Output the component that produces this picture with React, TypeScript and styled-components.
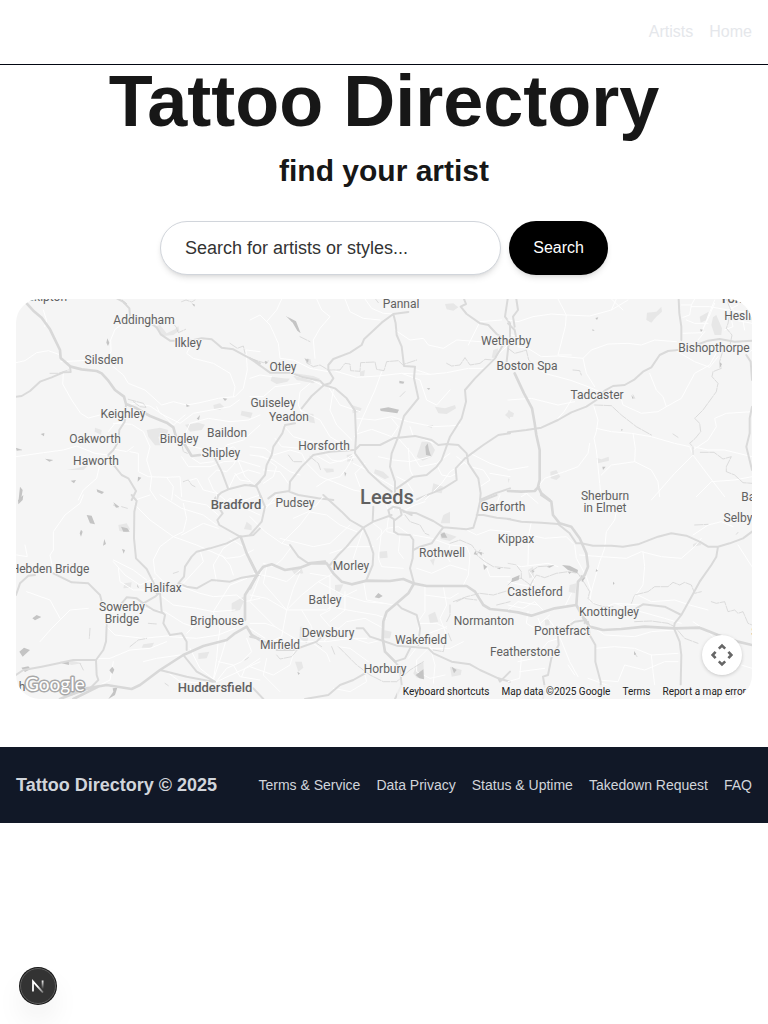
import React from "react";
import styled, { createGlobalStyle } from "styled-components";

const GlobalStyle = createGlobalStyle`
  *, *::before, *::after { box-sizing: border-box; }
  body {
    margin: 0;
    background: #ffffff;
    color: #171717;
    font-family: "Liberation Sans", Arial, sans-serif;
    font-size: 16px;
    line-height: 24px;
  }
  h1, h2, p { margin: 0; }
  a { color: inherit; text-decoration: none; }
  button, input { font: inherit; }
`;

const Header = styled.header`
  display: flex;
  align-items: center;
  justify-content: flex-end;
  min-height: 65px;
  padding: 0 16px;
  border-bottom: 1px solid #030712;
`;

const HeaderNav = styled.nav`
  display: flex;
  gap: 16px;
  color: #e5e7eb;
`;

const Main = styled.main`
  display: flex;
  flex-direction: column;
  align-items: center;
  padding: 0 16px 48px;
`;

const Title = styled.h1`
  font-size: 72px;
  line-height: 72px;
  font-weight: 700;
  text-align: center;
`;

const Subtitle = styled.h2`
  margin-top: 16px;
  font-size: 30px;
  line-height: 36px;
  font-weight: 700;
  text-align: center;
`;

const SearchForm = styled.form`
  display: flex;
  gap: 8px;
  width: 100%;
  max-width: 448px;
  margin: 32px 0 24px;
`;

const softShadow = "0 4px 6px -1px rgba(0,0,0,.1), 0 2px 4px -2px rgba(0,0,0,.1)";

const SearchInput = styled.input`
  flex: 1;
  min-width: 0;
  height: 54px;
  padding: 0 24px;
  border: 1px solid #d1d5db;
  border-radius: 27px;
  background: #ffffff;
  color: #171717;
  font-size: 18px;
  box-shadow: ${softShadow};
  &::placeholder { color: #333333; opacity: 1; }
`;

const SearchButton = styled.button`
  padding: 0 24px;
  border: 0;
  border-radius: 27px;
  background: #000000;
  color: #ffffff;
  box-shadow: ${softShadow};
`;

const MapFrame = styled.section`
  position: relative;
  width: 100%;
  height: 400px;
  overflow: hidden;
  border-radius: 24px;
  background: #f5f5f5;
  font-family: Roboto, sans-serif;
`;

const MapCanvas = styled.svg`
  display: block;
  width: 100%;
  height: 100%;
`;

const MapLabel = styled.text<{ $size: number; $strong: boolean }>`
  font-family: Roboto, sans-serif;
  font-size: ${(p) => p.$size}px;
  font-weight: ${(p) => (p.$strong ? 500 : 400)};
  fill: #616161;
  stroke: #f5f5f5;
  stroke-width: 2px;
  stroke-linejoin: round;
  paint-order: stroke;
  text-anchor: middle;
`;

const MapFooter = styled.div`
  position: absolute;
  right: 0;
  bottom: 0;
  display: flex;
  gap: 12px;
  padding: 0 6px;
  background: rgba(245, 245, 245, 0.7);
  color: #222222;
  font-size: 10px;
  line-height: 14px;
  white-space: nowrap;
`;

const MapFooterButton = styled.button`
  padding: 0;
  border: 0;
  background: none;
  color: inherit;
`;

const GoogleLink = styled.a`
  position: absolute;
  left: 8px;
  bottom: 0;
  height: 26px;
`;

const PanButton = styled.button`
  position: absolute;
  right: 10px;
  bottom: 24px;
  display: grid;
  place-items: center;
  width: 40px;
  height: 40px;
  padding: 0;
  border: 0;
  border-radius: 50%;
  background: #ffffff;
  box-shadow: 0 1px 4px -1px rgba(0, 0, 0, 0.3);
`;

const Footer = styled.footer`
  display: flex;
  flex-wrap: wrap;
  align-items: center;
  justify-content: space-between;
  gap: 16px;
  min-height: 76px;
  padding: 24px 16px;
  background: #111827;
  color: #d1d5db;
`;

const FooterBrand = styled.p`
  font-size: 18px;
  line-height: 28px;
  font-weight: 700;
`;

const FooterNav = styled.nav`
  display: flex;
  flex-wrap: wrap;
  gap: 16px;
  font-size: 14px;
  line-height: 20px;
`;

const DevButton = styled.button`
  position: fixed;
  left: 20px;
  bottom: 20px;
  display: grid;
  place-items: center;
  width: 36px;
  height: 36px;
  padding: 0;
  border: 1px solid #5c5c5c;
  border-radius: 50%;
  background: #333333;
  box-shadow: 0 0 0 1px #171717, 0 16px 32px -8px rgba(0, 0, 0, 0.2);
`;

type Sheet = {
  x: number;
  y: number;
  parks: string;
  minor: string;
  streams: string;
  roads: string;
  highways: string;
  water: string;
};

/* Each sheet is drawn at three units per map pixel. */
const sheets: Sheet[] = [
  {
    x: 0,
    y: 290,
    parks:
      "M440 420L480 413L505 420L500 436L475 440L482 466L465 466L445 440Z M725 362L758 368L752 384L722 376Z M640 345L660 340L672 350L660 360L642 356Z M555 404L595 398L615 404L605 420L570 425Z M462 110L480 105L500 130L525 118L535 108L538 122L520 135L490 138Z M285 413L305 420L303 434L284 425Z M230 535L265 525L250 540L200 540Z",
    minor:
      "M130 60L140 92L134 110 M48 218L75 212L110 188L145 182L182 195 M395 82L345 118L332 150L333 185L320 205 M182 215L245 212L280 208 M190 250L188 282L215 330L242 370L265 384L300 375 M340 230L370 255L385 280L435 300L485 345L520 335L560 345L600 338L655 325L705 320L730 295L742 240L738 180L780 185 M378 345L405 340L450 348L490 375L520 405L555 375 M470 350L480 370L540 400L580 370L690 350L718 330 M780 375L745 390L690 395L625 385L570 400L550 445L520 455 M340 400L395 403L430 425L450 470L440 510L455 560L450 600L470 630 M325 425L345 400L378 395 M48 500L130 488L190 480L230 468L285 490L325 495L345 478L380 485L400 470 M325 495L300 520L290 565L250 600L235 630 M390 485L415 490L415 545L445 560L500 562L540 560L545 620 M545 500L565 530L630 530L670 515L720 512L780 530 M580 150L560 190L580 205L640 220L690 250L705 290L700 320 M650 500L680 465L730 450L780 405 M660 490L700 470L720 490L700 525L680 545L650 540L625 565L640 600L675 630 M685 598L705 555L745 540L780 550 M555 575L590 565L610 600L650 610 M715 512L735 560L770 590 M560 465L620 480L660 475L705 487 M500 562L520 590L515 630 M705 550L720 570L750 575 M640 515L600 520L570 500",
    streams:
      "M515 97L528 110L535 128L557 118 M690 160L712 175L730 168L735 190 M385 328L430 340L438 352L420 350L400 335 M545 460L550 485L562 490 M545 35L558 30L575 36L585 30 M150 250L175 250L205 240 M550 575L565 570L575 585L585 590 M48 475L65 480",
    roads:
      "M48 320L65 318L90 303L120 275L155 262L190 247L212 246L210 230 M345 22L370 36L388 55L390 78 M455 102L470 112L482 133L510 152L535 152L570 152L605 145L635 148L652 162L665 173L700 178L740 200L780 220 M378 342L374 395L358 420L355 455L340 480L325 495L330 510L345 530L365 555L385 565L408 603L395 630 M645 505L665 545L685 598 M645 625L665 607L685 598L735 585L765 588L780 575",
    highways:
      "M75 35L100 62L125 83L150 118L180 180L182 204L212 230L245 238L290 243L305 250L325 272L345 300L372 320L378 342L410 355L450 378L500 398L520 412L528 440L555 465L575 498L600 495",
    water:
      "M322 145L328 158L324 168L319 158Z M122 432L133 429L132 439Z M48 474L66 480L50 482Z M135 506L160 510L148 515Z M212 572L228 570L222 580Z M290 598L312 606L306 612L292 606Z M558 343L570 348L560 351Z M668 324L682 326L675 333Z M590 386L600 375L597 390Z M414 560L424 563L413 575Z M60 590L68 600L63 630L56 628Z M575 40L585 44L583 50Z M365 28L382 42L370 40Z",
  },
  {
    x: 250,
    y: 290,
    parks:
      "M135 250L190 258L210 266L190 280L140 270L130 258Z M65 260L100 265L120 266L112 275L80 282L62 272Z M515 455L540 455L555 480L545 500L518 512L500 500Z M165 370L190 372L195 400L170 395Z M305 345L335 355L330 365L308 370Z M555 350L585 355L615 345L618 355L590 372L565 370Z M585 42L610 40L625 52L610 62L590 58Z M730 180L745 175L740 205L725 203Z M375 538L400 545L418 562L405 568L372 550Z M290 495L305 492L310 512L292 515Z M220 535L250 536L252 545L230 548Z M330 245L345 240L342 258L330 258Z M550 580L580 590L575 610L545 605Z M765 375L780 360L780 388Z M170 205L182 208L184 222L168 220Z M525 405L550 405L545 415Z",
    minor:
      "M0 90L30 75L60 105L85 160L90 205L130 210L180 235L235 245 M50 95L80 60L95 27 M200 27L215 60L240 80L210 115L190 150L195 205 M345 27L365 55L400 70L430 72 M285 27L300 65L340 85L390 90 M0 265L30 255L65 260 M130 255L185 270L215 285 M245 240L320 262L385 258L455 250L540 253L590 248L655 235L700 235L780 160 M395 245L375 300L335 390L315 440 M320 385L375 390L425 380L475 395L550 410L595 408L630 405 M425 385L445 410L425 440L365 418L320 432 M455 250L510 270L530 330L560 345L600 300 M435 120L480 150L520 145L535 165L580 175L620 150L690 155L720 145 M480 410L490 440L515 445L550 460 M100 405L130 440L165 450L200 460L240 470L310 480 M0 470L45 475L70 495L120 480L155 490L170 520L210 560L250 575L310 600L335 605 M30 500L70 510L120 545L150 555 M75 445L95 470L150 475 M315 490L275 515L245 510L220 485 M315 490L290 535L270 560L230 570L200 590 M310 520L350 540L380 560L430 590 M445 445L485 490L510 530L560 520L600 490 M475 475L480 540L490 560 M385 500L430 510L480 515L540 500 M560 525L575 555L600 560L620 550 M620 500L660 530L700 540L720 570L690 590 M660 490L720 520L780 540 M640 520L600 545L575 580L525 630 M0 495L40 500L80 530L70 560L40 580 M40 540L90 545L115 580 M195 495L240 520L320 500 M345 520L315 550L330 590 M180 280L150 305L145 345L155 365 M0 320L40 320L75 290L150 280 M235 290L270 345L330 365 M250 300L240 360L260 405L305 450 M150 360L210 390L240 440L305 480 M500 240L540 253 M655 165L690 95L755 90 M720 550L780 560 M440 560L470 575L490 605",
    streams:
      "M165 205L172 220L190 230L210 225L235 240L270 240L285 220L300 222L302 242L330 244L332 218L375 216L380 238L402 242L410 215L445 212L458 224L500 210 M590 220L605 228L630 225L645 203L660 225L690 220L705 208L730 210 M110 80L125 95 M150 140L180 155 M450 320L465 305 M115 495L130 515L155 515 M180 500L205 520L212 540 M0 205L40 218L55 213 M375 25L385 38",
    roads:
      "M430 72L475 66 M430 72L395 98L342 148L335 165L300 188L250 207L235 225L235 240L250 265L240 280L222 285L185 318L155 355 M135 400L105 405L97 430L70 470L65 495L50 525L45 555L20 585 M430 72L437 100L440 135L455 170L462 228L495 230L492 265L505 325L462 378L445 440L425 490L420 530L435 575L435 610 M222 285L255 295L290 325L315 362L318 440L315 490L355 545L395 582L425 605 M310 480L240 485L190 495L155 530L120 575L118 605L145 615L205 625L250 630 M0 205L60 248L120 248L160 262L210 272L222 285 M315 480L330 465L390 465L430 445L495 438L545 450L565 465L590 462L625 465L650 490L655 520L685 565L692 610L690 630 M440 595L465 578L490 560L530 555L560 530L575 510L600 440L635 385L648 335L645 300L675 265L735 205L750 180L768 150L740 132L715 105L690 100L650 72L632 50L648 42L642 27 M690 630L735 610L780 595 M780 430L745 435L700 465L645 505L617 535L620 570L580 595L500 628 M780 150L780 100L765 80L773 27 M770 215L775 170L780 155 M55 625L75 610L118 603 M0 585L20 590L35 625",
    highways: "",
    water:
      "M112 80L138 94L145 112L152 130L142 122L128 98Z M390 356L415 352L447 359L442 370L415 366L392 363Z M448 272L463 275L460 281L448 280Z M165 208L176 208L174 218Z M45 212L54 218L46 223Z M530 295L540 294L537 300Z M533 460L537 480L543 498L528 495L526 470Z M283 545L289 550L285 560Z",
  },
  {
    x: 508,
    y: 290,
    parks:
      "M417 68L445 65L460 50L462 65L445 80L430 98L415 90Z M615 82L625 75L642 115L640 135L620 135L610 105Z M575 80L602 65L595 90L578 98Z M265 503L280 508L302 500L303 512L270 520Z M127 545L145 540L157 560L145 570L128 565Z M0 360L18 370L15 380L0 382Z M0 565L5 568L0 580Z",
    minor:
      "M0 90L30 95L75 80L130 72L175 75L245 78L310 60L360 30 M310 60L325 27 M310 27L345 60 M150 27L175 75L172 110L150 195L190 195 M10 135L40 140L30 170L60 175L100 200L150 198L225 205L250 180L300 162L360 160L400 165L440 150L505 155 M60 210L110 250L185 270L240 290L275 305 M190 330L168 365L150 385 M225 205L235 250L260 290 M0 330L70 325L150 345L200 335 M335 310L345 345L400 370L450 365L475 350L520 325L560 250L605 225L630 180 M425 250L445 300L465 320L475 350 M258 350L270 390L265 425L258 445L265 480L275 580L280 630 M265 415L310 425L370 430L430 440L500 460L545 470L555 495L500 550L430 630 M375 430L382 475L380 515L310 525L280 555 M245 460L240 490L210 530L170 545L110 565L90 590 M380 515L430 540L450 575L455 620 M555 495L600 555L650 620 M732 365L655 370L620 385L625 410L600 450L555 480 M555 470L600 480L650 480L732 500 M732 560L680 570L610 575L565 620 M525 130L580 128L605 75L620 40 M590 125L570 150 M520 45L550 45L545 75L525 82 M550 45L560 27 M550 50L605 50L660 60L690 45 M535 90L560 100L600 100 M580 130L620 30 M665 65L675 110L650 120 M650 27L680 65L732 65 M680 90L732 100 M700 65L710 120 M500 180L560 215L605 232L630 200 M732 180L715 195 M0 600L55 610L90 640 M40 620L65 605 M0 540L60 530",
    streams:
      "M0 175L20 190L40 185L55 180L62 210L75 225 M195 240L215 242L220 255 M260 345L310 347L340 375L385 410L430 435 M495 432L510 442 M645 180L635 215L640 235L615 245L612 260L630 280L625 305L585 360L560 385L575 400L578 425L562 445L545 460L555 470L555 495 M577 487L618 487L645 507L670 500L655 530L655 545L680 555L705 578L732 580 M655 27L668 60L660 100L655 115L672 135L665 170 M375 315L380 325",
    roads:
      "M512 27L514 70L520 110L520 150 M0 100L20 120L25 145 M20 110L15 80L30 60L25 27 M510 180L480 183L455 195L430 232L405 245L380 268L350 285L315 288L290 302L265 330L235 350L190 367L150 390L100 413L55 420L0 427 M565 165L600 152L635 147L680 155L732 152 M715 195L728 215L732 270 M732 350L725 385L725 430L715 470L732 540",
    highways:
      "M20 250L48 310L72 355L80 400L85 435L95 480L95 570L90 590L100 610L125 630 M0 603L40 605L80 603L92 590",
    water:
      "M262 84L271 82L267 90Z M253 118L260 121L254 123Z M576 118L585 119L579 126Z M340 417L345 419L340 423Z M283 530L293 530L285 540Z M370 315L378 325L373 326Z M635 217L642 222L635 235Z",
  },
  {
    x: 0,
    y: 495,
    parks:
      "M355 90L380 85L390 102L382 112L358 108Z M740 80L755 92L755 106L732 102Z M373 265L395 262L392 278L370 280Z M595 475L628 470L620 490L595 492Z M430 448L462 443L455 458L425 458Z M695 325L740 300L720 345L695 350Z M180 500L220 498L245 505L215 510Z",
    minor:
      "M250 0L240 25L195 60L160 110L160 165L150 180L160 230 M75 150L82 185L50 180 M405 30L450 75L520 125L590 150L680 190L720 185L760 165 M520 125L480 155L460 195L465 235L490 260L480 285 M550 25L560 70L550 110L520 125 M405 15L450 0 M480 0L545 40L610 60L650 90 M545 120L610 85L655 100 M525 0L545 15L620 30L655 60 M655 40L690 10L720 20L780 0 M650 0L650 40 M720 0L735 40L780 60 M340 195L400 225L440 255 M340 200L375 240L420 270L465 250 M355 220L360 260L400 285L430 285L465 290 M600 165L610 200L550 265 M545 275L600 295L640 305L710 300L735 320L780 310 M480 300L520 330L590 340L640 350L705 345 M495 350L550 385L580 395L560 415 M365 330L350 350L320 350 M365 345L430 340L490 350 M315 390L345 420L430 430L510 422 M430 500L470 490L540 480 M500 440L450 460L390 465L330 490L290 490 M510 425L590 430L655 420L705 400 M640 350L660 400L655 435L650 490L640 555 M655 500L700 510L720 545L780 555 M570 460L600 520L650 560 M740 430L755 470L725 500L680 520L645 565 M680 430L665 480L640 555L600 570 M500 530L540 560L640 565 M120 440L155 400L210 345L265 340 M80 290L150 315L180 370 M300 570L330 555L340 500 M720 125L670 160L640 210L650 260 M665 180L690 210L700 240 M690 130L730 155 M740 250L690 270L640 350 M780 490L735 520L725 545 M560 545L650 560L780 500",
    streams:
      "M340 30L355 38 M365 35L382 40 M445 385L470 387 M390 455L415 435L440 430 M270 400L268 430 M520 235L535 230 M240 505L250 525 M495 565L505 572 M735 495L745 488",
    roads:
      "M395 0L410 18L403 50L402 130L408 190L440 222L460 262L470 295 M160 235L215 262L265 265L300 300L308 330 M105 240L85 242L60 265L48 300 M320 390L318 440L310 465L288 495L220 495L175 505L125 515L70 525L48 540 M288 495L290 540L295 555L270 580L210 600 M365 325L380 307L410 310L430 325L465 305L480 292L485 350L495 360L490 385L510 420L545 415L560 440L560 465 M430 325L460 345L490 355 M720 125L680 145L630 160L590 170L575 185L555 215L552 245L535 265L560 275L590 280L635 255L690 260L725 248L775 240 M655 0L648 25L668 55L652 75L658 90L720 125 M720 125L760 120L780 100 M480 525L560 545L640 560 M480 292L525 270 M550 480L590 530L645 560",
    highways:
      "M180 612L260 580L320 570L395 582L420 570L480 525L550 480L610 453L680 435L705 415L740 395L755 420L780 435 M220 612L295 575 M722 125L740 175L770 235L780 240 M735 375L735 300L775 235",
    water:
      "M260 60L275 62L285 88L270 85Z M363 95L382 100L389 110L370 110Z M58 470L72 458L90 465L68 485Z M97 370L110 360L124 366L105 376Z M64 518L85 514L92 522L75 531Z M337 515L343 524L337 537L328 526Z M338 580L352 578L345 600L325 612L340 590Z M185 505L206 498L207 510Z M243 104L248 110L243 125L239 115Z M313 132L318 147L309 152Z M366 162L375 165L371 176Z M54 15L70 0L68 15L55 28Z M340 22L358 35L348 38Z M412 267L417 280L412 276Z",
  },
  {
    x: 250,
    y: 495,
    parks:
      "M387 170L411 168L413 188L390 190Z M570 110L590 115L620 125L600 138L572 132Z M500 510L520 500L523 550L500 548L490 535Z M600 515L635 525L632 540L605 545Z M125 225L155 220L160 235L135 240Z M150 395L160 395L155 425L175 430L170 445L148 430Z M535 360L555 350L565 380L540 385Z M135 500L155 500L160 518L145 530Z M255 270L280 268L270 290L255 290Z M400 405L425 410L420 430L400 430Z M580 60L600 50L600 85L572 85Z M540 195L555 190L550 212Z",
    minor:
      "M40 50L80 0 M0 65L45 110L95 145L125 155L95 195L70 215L40 205 M30 40L90 15L140 20L195 35L220 5 M130 70L175 50L230 60L270 90L320 110 M90 130L190 155L240 145L300 90 M240 175L300 155L370 155 M0 300L50 310L110 345L160 345L230 345L270 310L320 285 M50 215L40 265L110 345L95 425L60 440 M110 345L155 300L205 260L250 235 M150 235L130 280L110 345 M205 260L280 300L345 320L400 325 M40 215L0 320L75 395L150 440L230 440L300 430L350 430 M10 235L60 245L110 260L150 225 M180 235L240 245L240 345L210 360L240 395L265 400 M155 345L185 395L190 430 M265 340L320 350L380 360L410 370 M285 290L285 345L240 380 M340 100L330 130L310 190 M370 40L370 85L395 105L385 190L395 215L460 220 M415 70L410 110L450 120L445 170L460 190 M380 135L410 100L445 95L480 120 M490 120L545 130L600 150L650 155L660 180L655 240L640 270 M600 150L590 185L600 200 M500 220L545 235L600 210L650 225 M525 275L525 350L505 380L505 430L540 455 M525 300L600 310L625 295 M580 275L590 330L570 370L590 420 M510 385L560 385L590 400 M505 430L550 410L590 395 M540 455L555 510L550 565 M540 455L500 495L500 530L540 550L585 540 M540 460L600 460L640 440 M505 450L475 490 M265 455L300 460L355 500 M190 445L230 475L240 500 M0 515L70 540L120 510L135 460 M50 490L40 540L90 590 M0 385L45 385L75 395 M395 435L355 445L310 430L265 400 M250 580L300 590L350 560L345 540 M430 0L430 45 M455 50L495 30L525 20 M410 20L440 35L460 65 M220 440L290 380L345 370L400 400 M640 100L680 120L720 105L780 110 M700 190L720 245L780 245 M180 50L150 90L95 145 M0 400L45 430 M395 0L415 45 M460 0L500 20L530 0 M750 0L740 25 M340 255L350 315L430 330",
    streams:
      "M465 60L480 80L510 90L525 115L537 120 M690 165L680 180L705 200L730 215L780 220 M610 320L650 305L690 295L730 300L780 285 M600 330L600 360L590 380 M620 320L640 310L680 315 M80 480L90 492L125 485L150 455 M245 455L255 480 M265 455L280 470L320 510L360 540L400 560L440 560L480 525L520 500 M550 465L580 470L585 440 M595 415L605 440 M540 420L535 450 M200 445L215 455 M600 145L630 135L665 150L680 170L700 175 M740 330L780 320",
    roads:
      "M120 150L145 185L175 205 M220 0L275 50L300 75L340 98 M340 98L355 130L370 175L368 210L348 258 M370 35L368 80 M240 210L265 180L290 155L310 130L340 98L370 80L425 60 M420 65L415 45L430 35L450 40L455 60L435 75L420 65 M432 75L432 110L445 118L480 120L490 135L488 190L480 220L492 265 M490 165L510 155L545 145L570 110L580 97L650 103L670 98L680 65L690 20L740 0 M460 50L500 55L550 78L580 97 M455 45L485 60 M320 400L340 400L360 425L400 438L440 452L480 455L535 460L550 475L605 500L660 508L690 525L745 550L780 560 M435 500L465 490L480 460 M435 500L450 520L455 570L435 612 M165 612L235 600L270 570L310 555L345 535 M440 325L455 340L500 360L510 400L505 450 M0 425L25 430L60 450 M80 465L130 465L200 440L215 425 M0 120L35 80L45 35L30 0 M680 60L700 60L740 68L780 72 M745 550L750 560L780 530 M10 580L40 612",
    highways:
      "M0 280L20 240L40 215L65 208L105 225L150 218L185 205L230 205L250 235L275 260L305 268L350 257L420 258L460 252L490 265L530 273L650 273L675 290L700 330L720 342L780 348 M492 265L475 295L440 325L410 350L400 380L398 430L405 470L435 500 M175 205L225 200 M0 195L20 235",
    water:
      "M374 307L385 294L398 303L387 310Z M497 540L520 523L522 553L508 550Z M572 118L583 112L592 128L575 128Z M605 515L620 525L612 535Z M676 167L682 180L671 178Z M700 208L712 215L702 225Z M740 220L752 218L750 223Z M142 530L150 535L145 540Z M685 172L696 172L695 182Z",
  },
  {
    x: 508,
    y: 495,
    parks:
      "M185 270L205 265L202 295L182 290Z M555 148L575 138L580 150L555 155Z M110 375L125 372L125 390L112 392Z M60 225L75 215L78 245L64 250Z",
    minor:
      "M200 150L205 190L235 245L250 290L245 320L275 330 M250 290L275 200L290 160L295 110L320 75L325 50 M215 180L280 185L355 190L400 170L460 185L520 190L560 155L580 130 M405 170L410 215L405 270L370 320 M555 120L600 90L640 80L675 95 M690 150L732 215 M60 210L62 120L70 80 M0 205L40 215L120 205L150 215 M65 120L110 130L175 125L195 145 M0 330L45 340L80 320L105 345 M0 345L30 320L90 330L105 345 M190 295L170 335 M210 335L260 350L320 325L400 330 M320 325L380 345L470 370L520 385 M555 380L600 410L620 430 M240 385L290 420L380 425L430 410L500 405 M510 475L430 480L380 460L320 455L265 460 M430 480L435 530L440 570 M270 555L330 560L350 510L410 525L470 500L510 500 M155 430L120 440L80 490L30 500 M180 510L200 540 M155 425L185 500L210 545 M0 470L40 490L35 550L0 560 M120 370L150 410L180 390L200 375 M90 370L110 420 M390 300L430 320L500 315L545 330L600 345 M0 260L20 265L70 275L75 265 M80 255L65 230 M35 530L110 520 M700 510L732 520 M60 350L55 385L80 400L125 360 M240 550L310 575",
    streams:
      "M65 275L75 255L85 240L110 248L145 235L180 230L210 235L230 265L245 290L240 310L255 325L285 335L315 335 M0 205L25 210L40 230L40 250L70 272 M68 230L90 215L135 212 M370 325L380 300L420 290L440 275L480 275L495 262L515 270L530 262L550 270L560 295L580 290 M610 320L625 325L650 320L660 350L680 345L690 355L705 350L720 385L732 390 M380 380L430 378L480 385L500 395L530 430L570 445 M380 475L387 485 M685 118L690 112 M0 270L20 250L40 250 M560 90L600 88",
    roads:
      "M0 72L40 80L100 83L150 87L185 115L205 145L220 145L255 152L310 152L345 155L390 148L450 125L490 115L535 122L575 140L600 155L630 155L665 145L705 130L732 110 M630 155L625 185L610 210L575 260L545 315L520 360L500 385L498 400L515 440L520 480L518 570 M385 340L405 328L470 335L520 360 M235 375L200 380L175 398L130 400 M150 425L152 450L130 490L120 540L105 545L110 575 M245 420L262 450L262 500L278 560L278 575 M240 380L245 420 M232 372L230 385 M518 590L518 612 M108 590L105 612",
    highways:
      "M100 0L130 20L135 60L155 85L190 95L215 130L235 175L240 215L230 240L210 260L205 330L140 340L70 362L30 352L0 348 M205 330L230 375L245 395L285 405L340 402L410 395L500 400L575 398L630 420L690 440L732 450",
    water:
      "M162 210L185 212L210 225L208 235L180 225Z M218 240L232 248L222 262Z M12 250L35 240L32 255L10 262Z M265 222L270 228L263 230Z M315 260L320 265L315 270Z M378 468L385 478L378 480Z M72 225L80 228L74 234Z M115 215L140 210L125 218Z M72 270L82 272L74 278Z M180 232L190 230L185 237Z",
  },
];

type Place = [name: string, x: number, y: number, size?: number];

const places: Place[] = [
  ["Skipton", 47, 301],
  ["Addingham", 144, 324],
  ["Ilkley", 188, 347],
  ["Silsden", 104, 364],
  ["Otley", 283, 371],
  ["Pannal", 401, 308],
  ["Wetherby", 506, 345],
  ["Boston Spa", 527, 370],
  ["Bishopthorpe", 714, 352],
  ["Heslington", 753, 320],
  ["York", 733, 303, 13],
  ["Tadcaster", 597, 399],
  ["Guiseley", 273, 407],
  ["Yeadon", 289, 421],
  ["Keighley", 123, 418],
  ["Oakworth", 95, 443],
  ["Haworth", 96, 465],
  ["Bingley", 179, 443],
  ["Baildon", 227, 437],
  ["Shipley", 221, 457],
  ["Horsforth", 324, 450],
  ["Leeds", 387, 504, 20],
  ["Bradford", 236, 509, 13],
  ["Pudsey", 295, 507],
  ["Garforth", 503, 511],
  ["Sherburn", 605, 500],
  ["in Elmet", 605, 512],
  ["Barlby", 758, 501],
  ["Selby", 738, 522],
  ["Kippax", 516, 543],
  ["Rothwell", 442, 557],
  ["Morley", 351, 570],
  ["Castleford", 535, 596],
  ["Hebden Bridge", 50, 573],
  ["Halifax", 163, 592],
  ["Sowerby", 122, 611],
  ["Bridge", 122, 623],
  ["Brighouse", 217, 625],
  ["Batley", 325, 604],
  ["Dewsbury", 328, 637],
  ["Mirfield", 280, 649],
  ["Wakefield", 421, 644],
  ["Normanton", 484, 625],
  ["Pontefract", 562, 635],
  ["Knottingley", 609, 616],
  ["Featherstone", 525, 656],
  ["Horbury", 385, 673],
  ["Huddersfield", 215, 692, 13],
  ["Snaith", 768, 636],
  ["h", 22, 691],
];

const MapSheet = ({ sheet }: { sheet: Sheet }) => (
  <g
    transform={`translate(${sheet.x} ${sheet.y}) scale(${1 / 3})`}
    fill="none"
    strokeLinecap="round"
    strokeLinejoin="round"
  >
    <path d={sheet.parks} fill="#e7e7e7" />
    <path d={sheet.minor} stroke="#fefefe" strokeWidth="3" />
    <path d={sheet.streams} stroke="#cfcfcf" strokeWidth="2" strokeDasharray="24 4" />
    <path d={sheet.water} fill="#c4c4c4" />
    <path d={sheet.roads} stroke="#dadada" strokeWidth="6" />
    <path d={sheet.highways} stroke="#d8d8d8" strokeWidth="8" />
  </g>
);

const AreaMap = () => (
  <MapFrame aria-label="Map of artists">
    <MapCanvas viewBox="16 299 736 400" preserveAspectRatio="xMidYMid slice">
      {sheets.map((sheet) => (
        <MapSheet key={`${sheet.x}-${sheet.y}`} sheet={sheet} />
      ))}
      {places.map(([name, x, y, size = 12]) => (
        <MapLabel key={name} x={x} y={y} $size={size} $strong={size > 12}>
          {name}
        </MapLabel>
      ))}
    </MapCanvas>
    <GoogleLink href="#google" aria-label="Open this area in Google Maps">
      <svg width="64" height="26" viewBox="0 0 64 26">
        <text
          x="1"
          y="18"
          fontFamily="Lato, sans-serif"
          fontSize="19"
          fill="#ffffff"
          stroke="#a8a8a8"
          strokeWidth="3"
          strokeLinejoin="round"
          paintOrder="stroke"
        >
          Google
        </text>
      </svg>
    </GoogleLink>
    <PanButton type="button" aria-label="Map camera controls">
      <svg width="24" height="24" viewBox="0 0 24 24" fill="none" stroke="#666666" strokeWidth="2.6">
        <path d="M8.8 5.6L12 2.6L15.2 5.6M8.8 18.4L12 21.4L15.2 18.4M5.6 8.8L2.6 12L5.6 15.2M18.4 8.8L21.4 12L18.4 15.2" />
      </svg>
    </PanButton>
    <MapFooter>
      <MapFooterButton type="button">Keyboard shortcuts</MapFooterButton>
      <span>Map data ©2025 Google</span>
      <a href="#map-terms">Terms</a>
      <a href="#map-error">Report a map error</a>
    </MapFooter>
  </MapFrame>
);

const footerLinks = [
  ["Terms & Service", "#terms"],
  ["Data Privacy", "#privacy"],
  ["Status & Uptime", "#status"],
  ["Takedown Request", "#takedown"],
  ["FAQ", "#faq"],
];

export default function App() {
  return (
    <>
      <GlobalStyle />
      <Header>
        <HeaderNav aria-label="Main">
          <a href="#artists">Artists</a>
          <a href="#home">Home</a>
        </HeaderNav>
      </Header>
      <Main>
        <Title>Tattoo Directory</Title>
        <Subtitle>find your artist</Subtitle>
        <SearchForm role="search" onSubmit={(e) => e.preventDefault()}>
          <SearchInput
            type="text"
            aria-label="Search for artists or styles"
            placeholder="Search for artists or styles..."
          />
          <SearchButton type="submit">Search</SearchButton>
        </SearchForm>
        <AreaMap />
      </Main>
      <Footer>
        <FooterBrand>Tattoo Directory © 2025</FooterBrand>
        <FooterNav aria-label="Footer">
          {footerLinks.map(([label, href]) => (
            <a key={href} href={href}>
              {label}
            </a>
          ))}
        </FooterNav>
      </Footer>
      <DevButton type="button" aria-label="Open developer tools">
        <svg width="14" height="14" viewBox="0 0 14 14" fill="none">
          <defs>
            <linearGradient id="stem" x1="0" y1="1" x2="0" y2="10" gradientUnits="userSpaceOnUse">
              <stop stopColor="#ffffff" />
              <stop offset="1" stopColor="#ffffff" stopOpacity="0" />
            </linearGradient>
            <linearGradient id="slash" x1="7" y1="7" x2="13" y2="14" gradientUnits="userSpaceOnUse">
              <stop stopColor="#ffffff" />
              <stop offset="1" stopColor="#ffffff" stopOpacity="0.2" />
            </linearGradient>
          </defs>
          <path d="M2 12.5V2.4L12 13.6" stroke="url(#slash)" strokeWidth="1.8" />
          <path d="M11.6 1.5V10.5" stroke="url(#stem)" strokeWidth="1.8" />
        </svg>
      </DevButton>
    </>
  );
}
